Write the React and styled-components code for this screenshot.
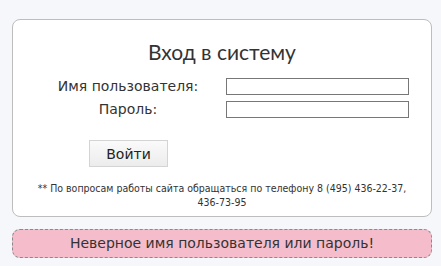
import React from 'react'
import styled, { createGlobalStyle } from 'styled-components'

const GlobalStyle = createGlobalStyle`
  html, body {
    margin: 0;
    padding: 0;
    background: #f5f7fb;
  }
  body {
    font-family: 'DejaVu Sans', Verdana, sans-serif;
    color: #333;
  }
`

const Page = styled.div`
  padding: 19px 9px 0 12px;
  width: 420px;
`

const Card = styled.div`
  box-sizing: border-box;
  width: 420px;
  height: 198px;
  background: #fff;
  border: 1px solid #bdbdbd;
  border-radius: 8px;
  padding-top: 19px;
`

const Title = styled.h1`
  margin: 0;
  text-align: center;
  font-family: Lato, 'Open Sans', sans-serif;
  font-size: 21px;
  font-weight: normal;
  line-height: 26px;
  color: #333;
`

const Form = styled.div`
  display: grid;
  grid-template-columns: 150px 183px;
  column-gap: 23px;
  row-gap: 6px;
  margin: 13px 0 0 40px;
  align-items: center;
`

const Label = styled.label`
  text-align: center;
  white-space: nowrap;
  font-size: 14px;
  line-height: 17px;
  color: #333;
`

const Input = styled.input`
  box-sizing: border-box;
  width: 183px;
  height: 17px;
  border: 1px solid #777;
  background: #fff;
  padding: 0;
  margin: 0;
`

const Button = styled.button`
  display: block;
  box-sizing: border-box;
  margin: 22px 0 0 76px;
  width: 79px;
  height: 27px;
  border: 1px solid #d4d4d4;
  background: linear-gradient(#fafafa, #ececec);
  font-family: inherit;
  font-size: 14px;
  color: #222;
  padding: 0;
`

const Note = styled.p`
  margin: 14px 24px 0;
  text-align: center;
  font-family: 'DejaVu Sans Condensed', 'DejaVu Sans', sans-serif;
  font-size: 10.5px;
  line-height: 14px;
  color: #333;
`

const Error = styled.div`
  box-sizing: border-box;
  width: 420px;
  height: 29px;
  margin-top: 12px;
  background: #f5bccb;
  border: 1px dashed #8a8a8a;
  border-radius: 8px;
  text-align: center;
  font-size: 14px;
  line-height: 27px;
  color: #333;
`

export default function App() {
  return (
    <>
      <GlobalStyle />
      <Page>
        <Card>
          <Title>Вход в систему</Title>
          <Form>
            <Label>Имя пользователя:</Label>
            <Input type="text" />
            <Label>Пароль:</Label>
            <Input type="password" />
          </Form>
          <Button>Войти</Button>
          <Note>
            ** По вопросам работы сайта обращаться по телефону 8 (495) 436-22-37,
            436-73-95
          </Note>
        </Card>
        <Error>Неверное имя пользователя или пароль!</Error>
      </Page>
    </>
  )
}
